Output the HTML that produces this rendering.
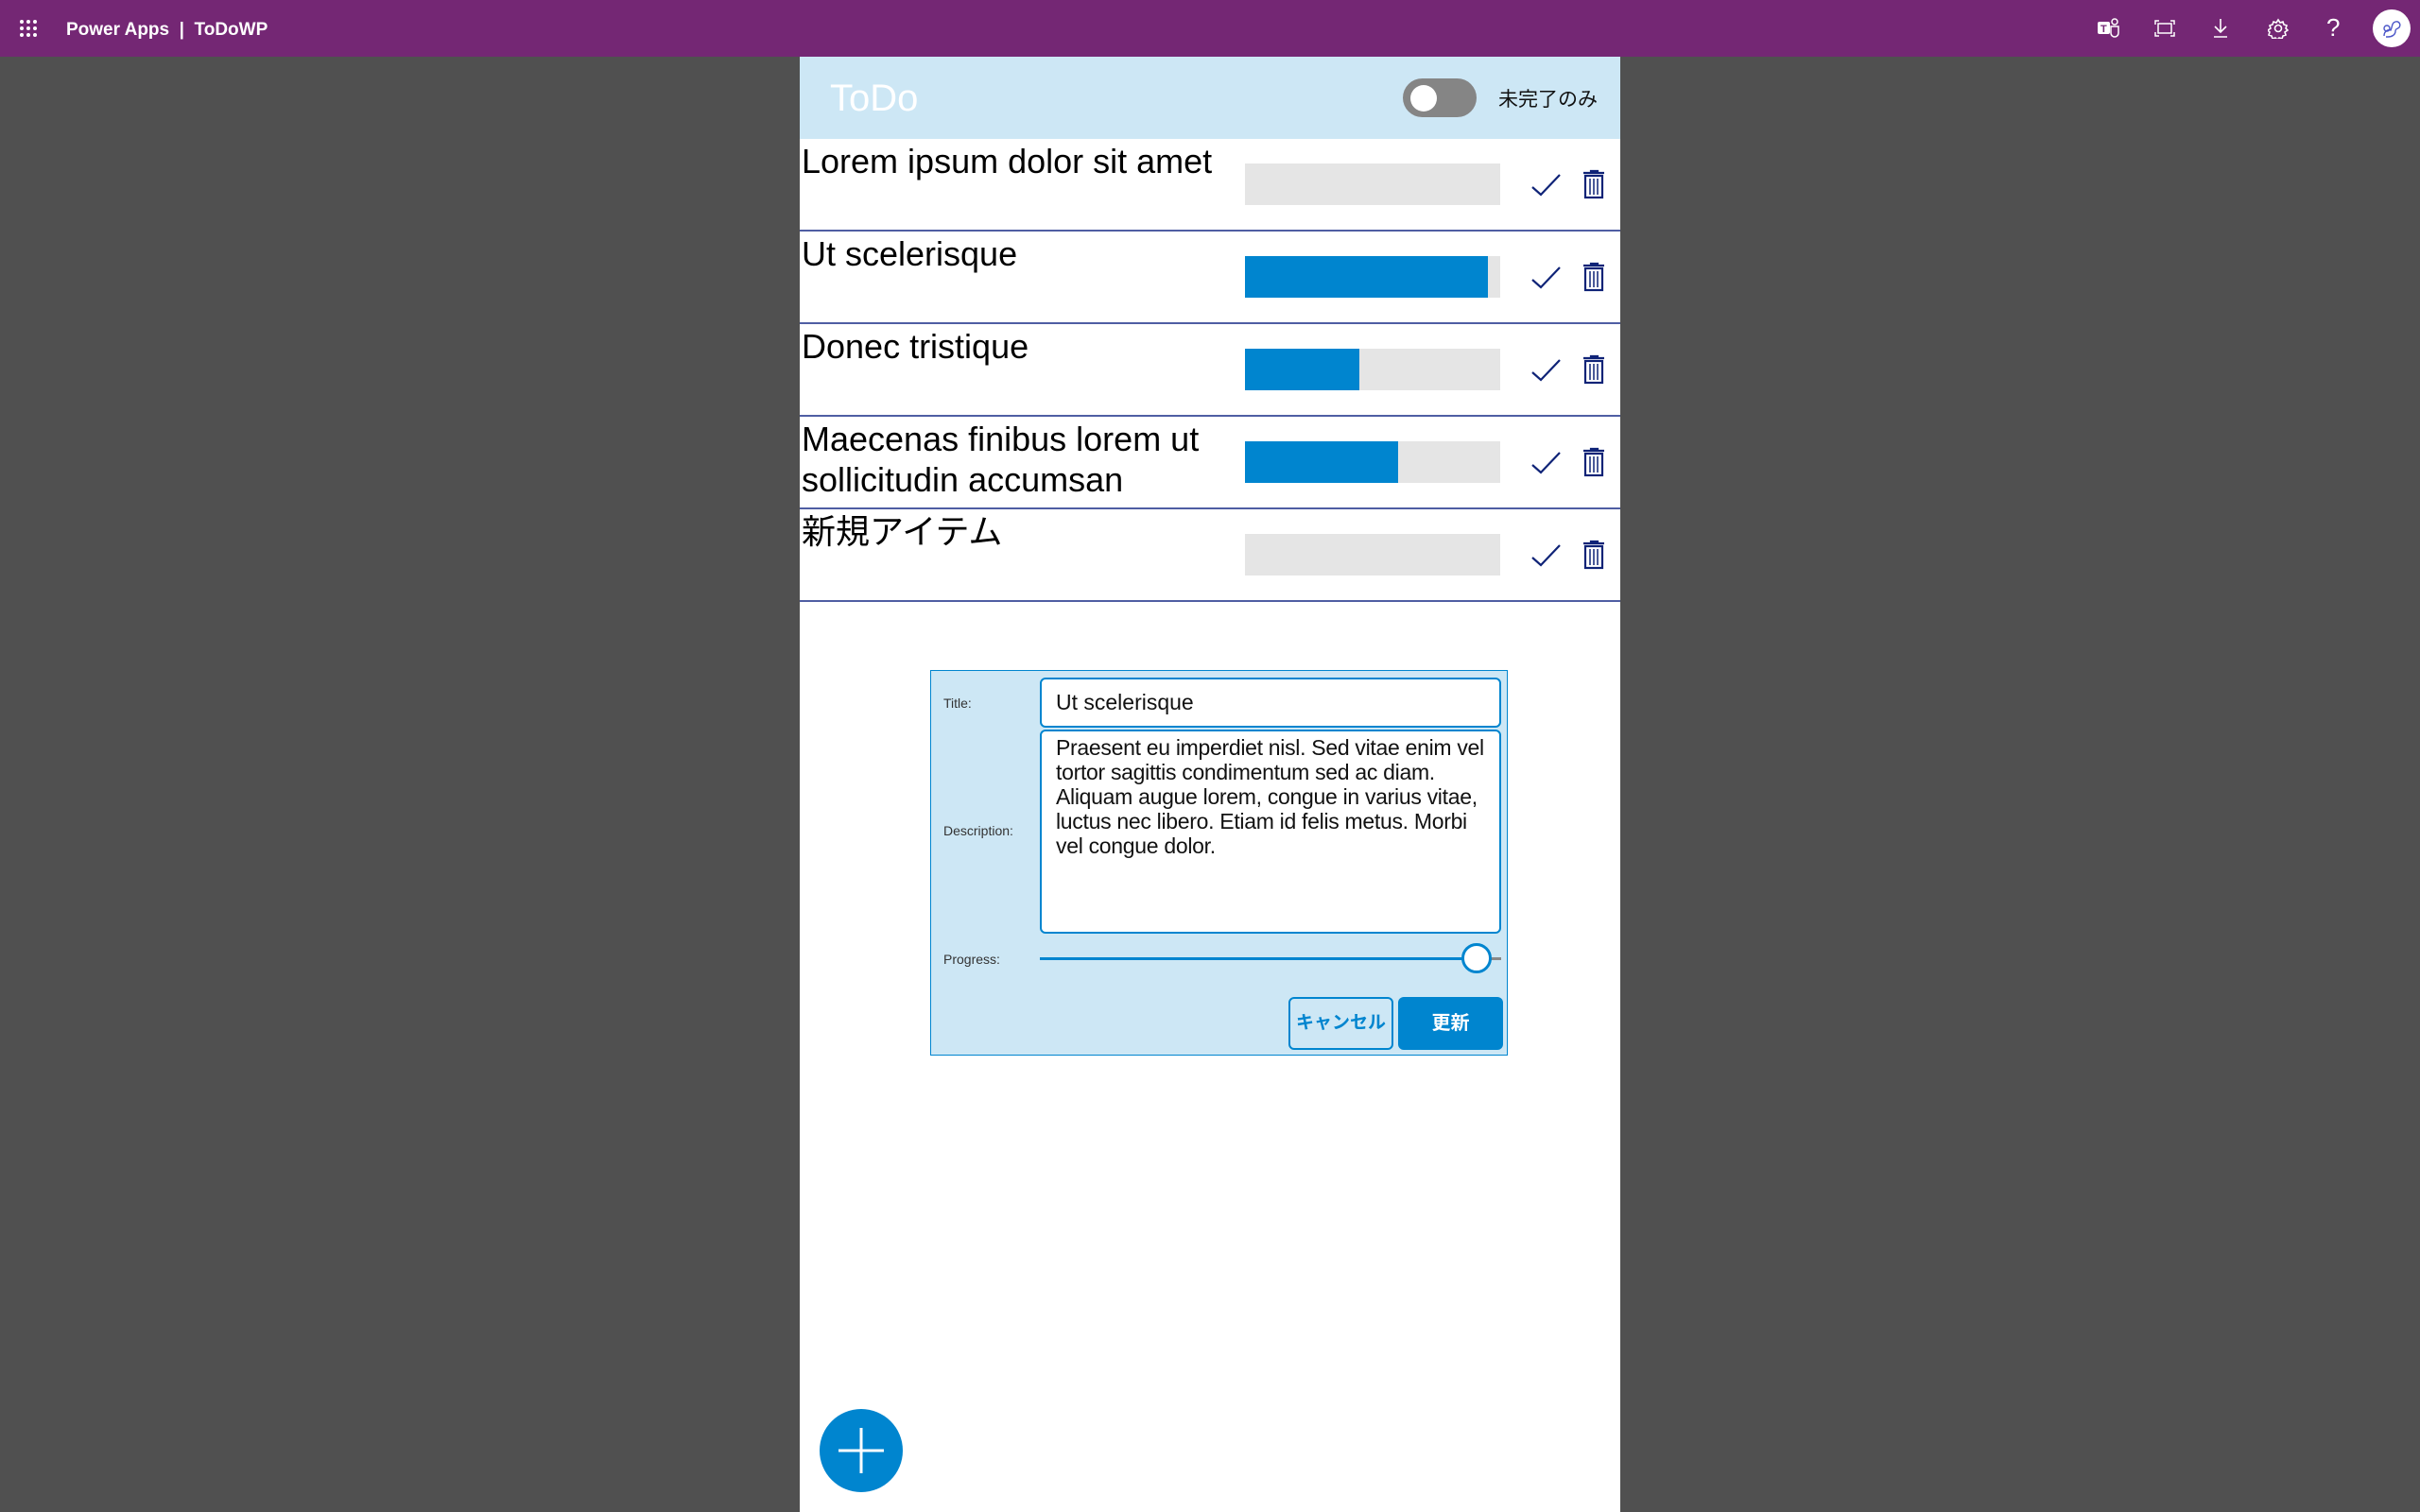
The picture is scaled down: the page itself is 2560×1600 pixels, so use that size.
<!DOCTYPE html>
<html><head><meta charset="utf-8"><style>
*{margin:0;padding:0;box-sizing:border-box}
body{width:2560px;height:1600px;background:#505050;position:relative;overflow:hidden;font-family:"Liberation Sans","Noto Sans CJK JP",sans-serif}
.bar{position:absolute;left:0;top:0;width:2560px;height:60px;background:#742774}
.abs{position:absolute}
.phone{position:absolute;left:846px;top:60px;width:868px;height:1540px;background:#fff}
.hdr{position:absolute;left:0;top:0;width:868px;height:87px;background:#CDE7F5}
.row{position:absolute;left:0;width:868px;height:98px;border-bottom:2px solid #4f5ea3}
.row .t{position:absolute;left:2px;top:2px;font-size:36px;color:#000;line-height:43px;width:470px}
.pb{position:absolute;left:471px;top:26px;width:270px;height:44px;background:#e5e5e5}
.pb i{position:absolute;left:0;top:0;height:44px;background:#0085CF}
.form{position:absolute;left:138px;top:649px;width:611px;height:408px;background:#CDE7F5;border:1.5px solid #0085CF}
.lbl{position:absolute;left:13px;font-size:14px;color:#333}
.inp{position:absolute;left:115px;width:488px;background:#fff;border:2px solid #0085CF;border-radius:6px;font-size:23px;color:#111;padding-left:15px}
</style></head><body>
<div class="bar">
 <svg class="abs" style="left:20px;top:20px" width="20" height="20"><g fill="#fff"><circle cx="3" cy="3" r="2"/><circle cx="10" cy="3" r="2"/><circle cx="17" cy="3" r="2"/><circle cx="3" cy="10" r="2"/><circle cx="10" cy="10" r="2"/><circle cx="17" cy="10" r="2"/><circle cx="3" cy="17" r="2"/><circle cx="10" cy="17" r="2"/><circle cx="17" cy="17" r="2"/></g></svg>
 <div class="abs" style="left:70px;top:21px;color:#fff;font-size:19px;font-weight:bold;">Power Apps&nbsp; |&nbsp; ToDoWP</div>
 <svg class="abs" style="left:2219px;top:19px" width="24" height="22"><rect x="0" y="4" width="13" height="13" rx="2" fill="#fff"/><text x="3" y="15" font-size="11" font-weight="bold" fill="#742774" font-family="Liberation Sans">T</text><circle cx="18" cy="4" r="3" fill="none" stroke="#fff" stroke-width="1.5"/><path d="M14 9h8v7a4 4 0 0 1-8 0z" fill="none" stroke="#fff" stroke-width="1.5"/></svg>
 <svg class="abs" style="left:2279px;top:21px" width="22" height="18" fill="none" stroke="#fff" stroke-width="1.5"><path d="M1 5V1h4M17 1h4v4M21 13v4h-4M5 17H1v-4"/><rect x="4" y="4" width="14" height="10"/></svg>
 <svg class="abs" style="left:2340px;top:19px" width="18" height="22" fill="none" stroke="#fff" stroke-width="1.6"><path d="M9 1v14M3 9l6 6 6-6M2 20h14"/></svg>
 <svg class="abs" style="left:2399px;top:19px" width="22" height="22" fill="none" stroke="#fff" stroke-width="1.6"><circle cx="11" cy="11" r="3.5"/><path d="M11 2l2 3 3-1 1 3 3 1-1 3 2 2-3 2 1 3-3 1-1 3-3-1-2 2-2-2-3 1-1-3-3-1 1-3-2-2 3-2-1-3 3-1 1-3 3 1z"/></svg>
 <div class="abs" style="left:2461px;top:14px;color:#fff;font-size:26px">?</div>
 <div class="abs" style="left:2510px;top:10px;width:40px;height:40px;border-radius:50%;background:#fff"></div>
 <svg class="abs" style="left:2518px;top:18px" width="24" height="24" fill="none" stroke="#4a55c8" stroke-width="1.4"><path d="M4 20c0-5 4-7 7-6 2-4 1-8 5-9 4-1 6 3 4 6-2 2-4 1-4 4 0 4-4 6-8 6H6"/><circle cx="7" cy="12" r="3"/></svg>
</div>
<div class="phone">
 <div class="hdr">
  <div class="abs" style="left:32px;top:22px;font-size:40px;color:#fff">ToDo</div>
  <div class="abs" style="left:638px;top:23px;width:78px;height:41px;border-radius:21px;background:#858585"></div>
  <div class="abs" style="left:646px;top:30px;width:28px;height:28px;border-radius:50%;background:#fff"></div>
  <div class="abs" style="left:739px;top:29px;font-size:21px;color:#111">未完了のみ</div>
 </div>
 <div class="row" style="top:87px"><div class="t">Lorem ipsum dolor sit amet</div><div class="pb"></div></div>
 <div class="row" style="top:185px"><div class="t">Ut scelerisque</div><div class="pb"><i style="width:257px"></i></div></div>
 <div class="row" style="top:283px"><div class="t">Donec tristique</div><div class="pb"><i style="width:121px"></i></div></div>
 <div class="row" style="top:381px"><div class="t">Maecenas finibus lorem ut sollicitudin accumsan</div><div class="pb"><i style="width:162px"></i></div></div>
 <div class="row" style="top:479px"><div class="t">新規アイテム</div><div class="pb"></div></div>
 <svg class="abs" style="left:0;top:87px" width="868" height="490">
  <defs><g id="ic" fill="none" stroke="#0f2377" stroke-width="2.2"><path d="M775 51l9 8 20-21"/><path d="M829 36h22M837 36v-2h7v2"/><rect x="831" y="39" width="18" height="23"/><path d="M836 42v17M840 42v17M844 42v17" stroke-width="1.5"/></g></defs>
  <use href="#ic" y="0"/><use href="#ic" y="98"/><use href="#ic" y="196"/><use href="#ic" y="294"/><use href="#ic" y="392"/>
 </svg>
 <div class="form">
  <div class="lbl" style="top:26px">Title:</div>
  <div class="lbl" style="top:161px">Description:</div>
  <div class="lbl" style="top:297px">Progress:</div>
  <div class="inp" style="top:7px;height:53px;line-height:49px">Ut scelerisque</div>
  <div class="inp" style="top:62px;height:216px;line-height:26px;padding-top:4px;white-space:nowrap;overflow:hidden;letter-spacing:-0.3px">Praesent eu imperdiet nisl. Sed vitae enim vel<br>tortor sagittis condimentum sed ac diam.<br>Aliquam augue lorem, congue in varius vitae,<br>luctus nec libero. Etiam id felis metus. Morbi<br>vel congue dolor.</div>
  <div class="abs" style="left:115px;top:303px;width:465px;height:3px;background:#0085CF"></div>
  <div class="abs" style="left:580px;top:303px;width:23px;height:3px;background:#888"></div>
  <div class="abs" style="left:561px;top:288px;width:32px;height:32px;border-radius:50%;background:#fff;border:3px solid #0085CF"></div>
  <div class="abs" style="left:378px;top:345px;width:111px;height:56px;border:2px solid #0085CF;border-radius:6px;color:#0085CF;font-size:19px;font-weight:bold;text-align:center;line-height:52px">キャンセル</div>
  <div class="abs" style="left:494px;top:345px;width:111px;height:56px;background:#0085CF;border-radius:6px;color:#fff;font-size:20px;font-weight:bold;text-align:center;line-height:56px">更新</div>
 </div>
 <div class="abs" style="left:21px;top:1431px;width:88px;height:88px;border-radius:50%;background:#0085CF"></div>
 <svg class="abs" style="left:21px;top:1431px" width="88" height="88"><path d="M44 20v48M20 44h48" stroke="#fff" stroke-width="3"/></svg>
</div>
</body></html>
